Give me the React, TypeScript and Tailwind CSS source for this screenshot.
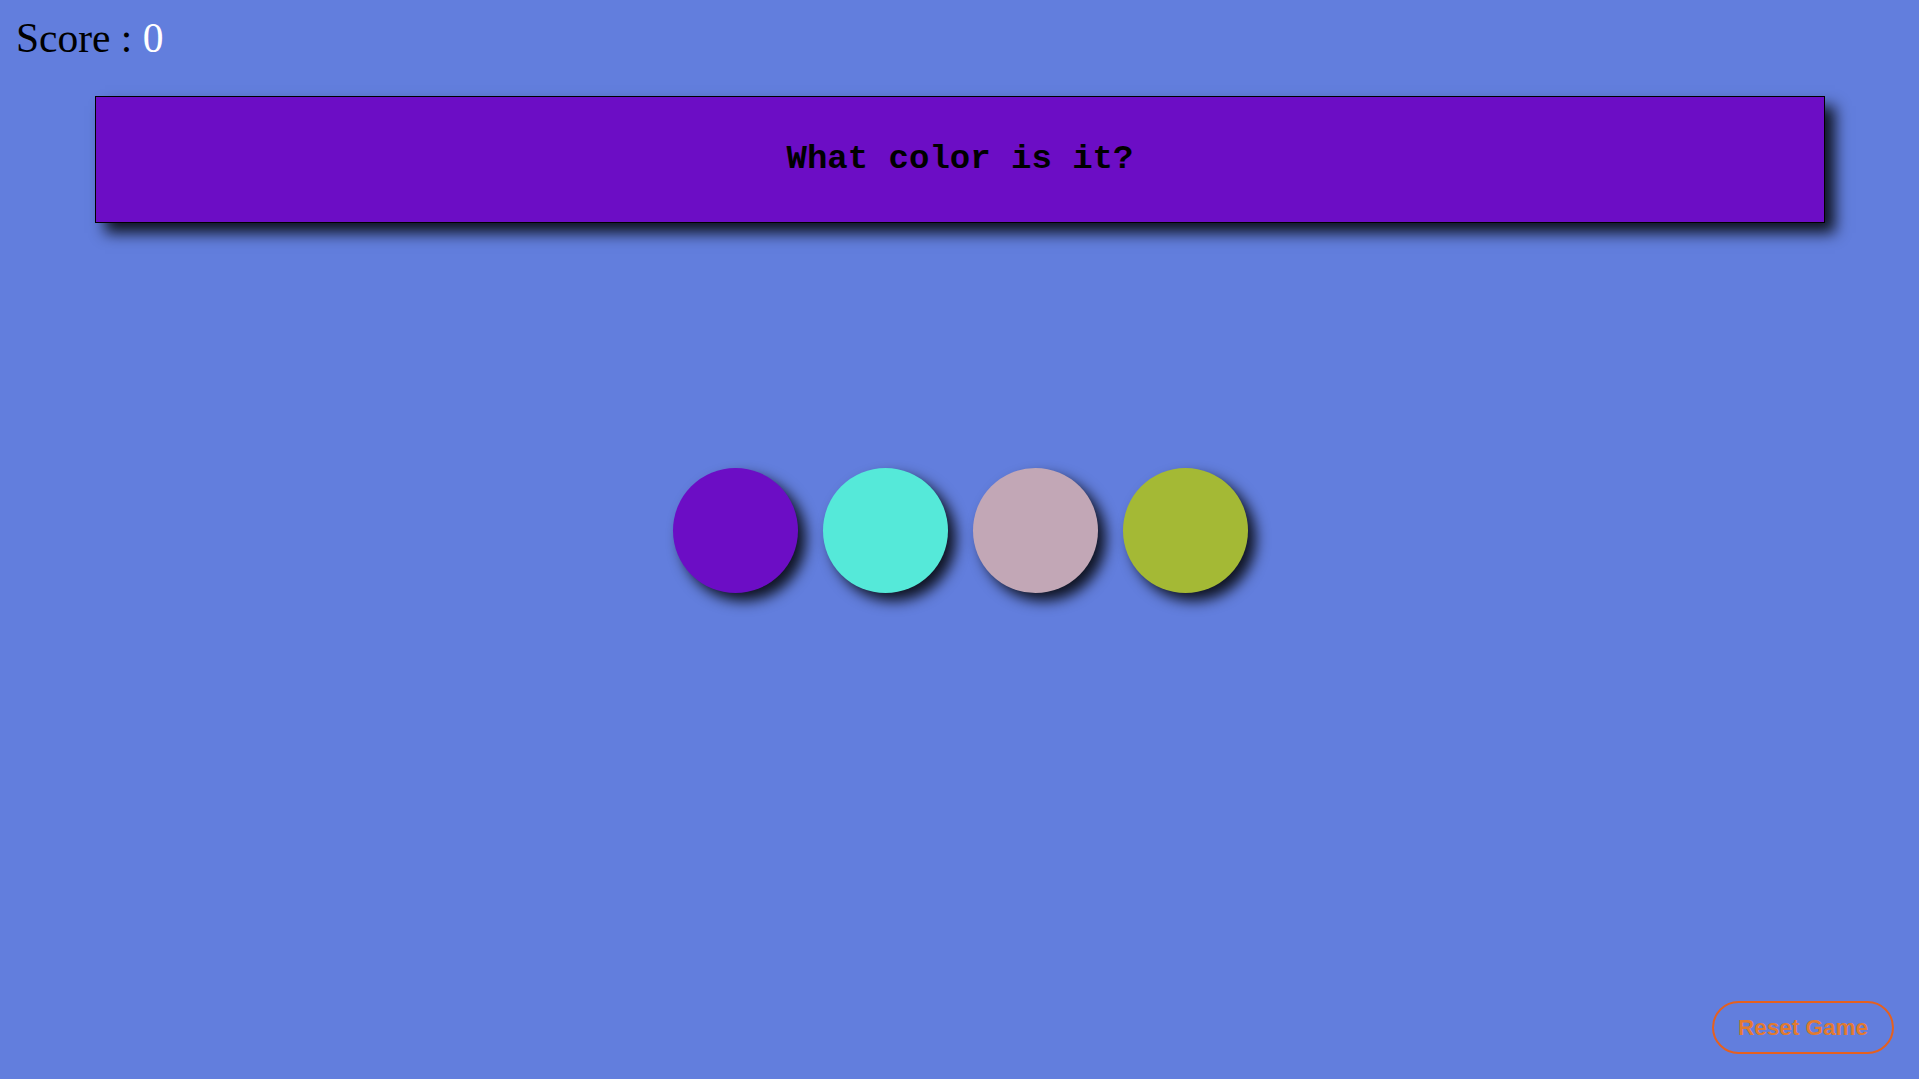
const colors = ["#6c0dc5", "#55e9d9", "#c2a7b6", "#a4b935"];

const App = () => {
    return (
    <div className="h-screen w-full bg-[#627edd] flex flex-col overflow-hidden">
        <div className="pt-[16px] pl-[16px] text-[41.5px] leading-[44px] text-black font-['Liberation_Serif',serif]">
            Score : <span className="text-white">0</span>
        </div>

        <div className="mt-[36px] ml-[95px] mr-[94px] h-[127px] bg-[#6c0dc5] border border-black shadow-[10px_10px_14px_rgba(0,0,0,0.85)] flex items-center justify-center">
            <h1 className="text-[34px] font-bold text-black font-['Liberation_Mono',monospace]">
                What color is it?
            </h1>
        </div>

        <div className="mt-[245px] pl-[2px] flex flex-row justify-center gap-[25px]">
            {colors.map((c) => (
                <div
                    key={c}
                    className="w-[125px] h-[125px] rounded-full shadow-[8px_8px_14px_rgba(0,0,0,0.85)] cursor-pointer"
                    style={{ backgroundColor: c }}
                />
            ))}
        </div>

        <div className="mt-auto flex justify-end pr-[25px] pb-[25px]">
            <button className="w-[182px] h-[53px] rounded-full border-2 border-[#e5601f] text-[#e27a2f] font-bold text-[22.5px] font-['Liberation_Sans',sans-serif] cursor-pointer">
                Reset Game
            </button>
        </div>
    </div>
    );
}

export default App;
